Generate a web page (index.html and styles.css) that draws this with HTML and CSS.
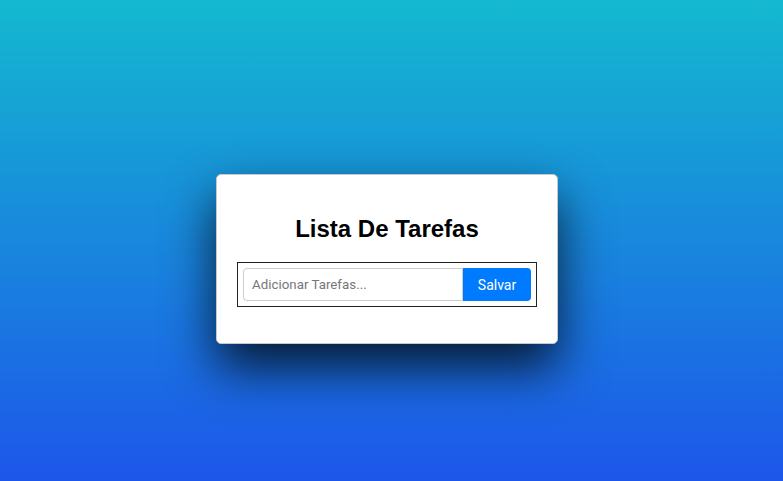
FILE: index.html
```html
<!DOCTYPE html>
<html lang="pt">
<head>
<meta charset="utf-8">
<title>Lista De Tarefas</title>
<link rel="stylesheet" href="styles.css">
</head>
<body>
  <main class="card">
    <h2 class="title">Lista De Tarefas</h2>
    <form class="task-form">
      <input class="task-input" type="text" placeholder="Adicionar Tarefas...">
      <button class="task-btn" type="button">Salvar</button>
    </form>
  </main>
</body>
</html>
```
FILE: styles.css
```css
html, body {
  margin: 0;
  height: 100%;
}
body {
  background: linear-gradient(to bottom, #14b9cf 0%, #1d56ea 100%);
  display: flex;
  align-items: center;
  justify-content: center;
  font-family: "Liberation Sans", Arial, sans-serif;
}
.card {
  box-sizing: border-box;
  width: 342px;
  height: 170px;
  margin: 37px 9px 0 0;
  background: #fff;
  border: 1px solid #c8c8c8;
  border-radius: 5px;
  padding: 20px 20px 0;
  box-shadow: 0 24px 50px rgba(0, 0, 0, 0.78);
}
.title {
  margin: 20px 0 19px;
  text-align: center;
  font-size: 24px;
  font-weight: bold;
  line-height: 28px;
  color: #000;
}
.task-form {
  display: flex;
  border: 1px solid #222;
  padding: 5px;
  margin: 0;
}
.task-input {
  box-sizing: border-box;
  flex: 1;
  height: 33px;
  border: 1px solid #ccc;
  border-radius: 4px 0 0 4px;
  padding: 0 8px;
  font-family: Roboto, "Liberation Sans", sans-serif;
  font-size: 13.333px;
  outline: none;
}
.task-input::placeholder {
  color: #777;
}
.task-btn {
  box-sizing: border-box;
  width: 68px;
  height: 33px;
  border: none;
  border-radius: 0 4px 4px 0;
  background: #007bff;
  color: #fff;
  font-family: Roboto, "Liberation Sans", sans-serif;
  font-size: 14px;
  cursor: pointer;
}
```
